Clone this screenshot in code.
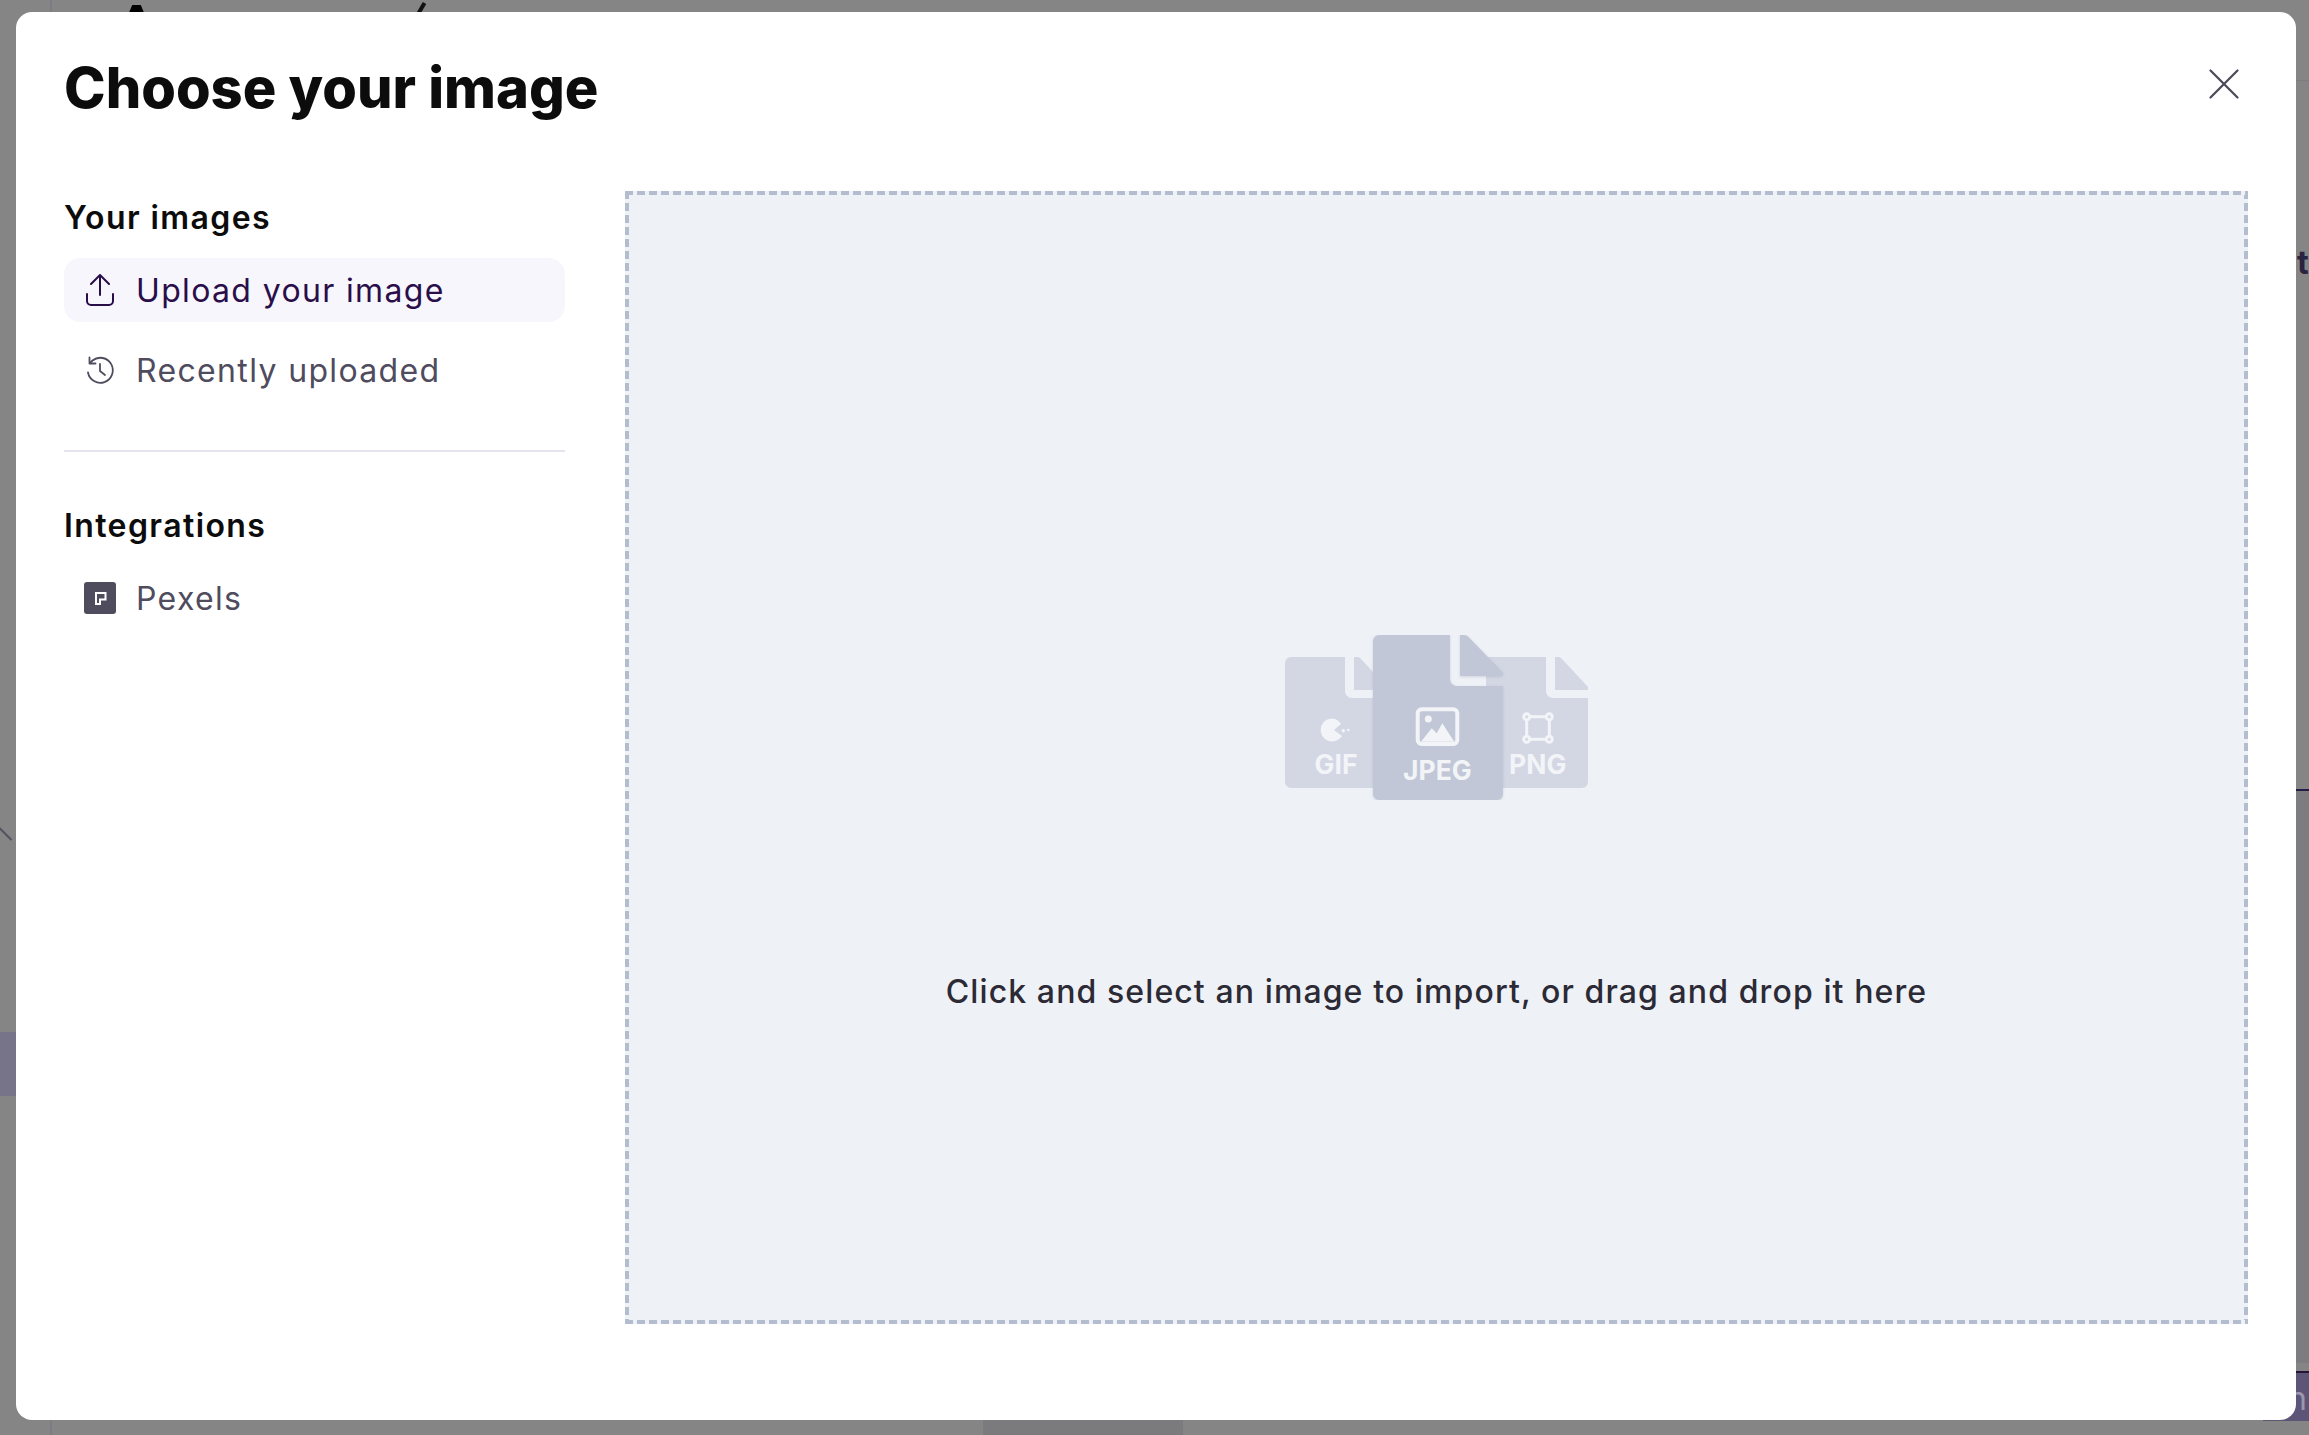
<div class="page">
  <div class="bg-line-v"></div>
  <div class="bg-line-h"></div>
  <div class="bg-a"></div>
  <div class="bg-stroke"></div>
  <div class="bg-diag"></div>
  <div class="bg-purple-left"></div>
  <div class="bg-right-band"></div>
  <div class="bg-right-line"></div>
  <div class="bg-purple-right"><span>n</span></div>
  <div class="bg-strip"></div>
  <span class="bg-t">t</span>

  <div class="overlay">
    <section class="modal">
      <header class="head">
        <h1>Choose your image</h1>
        <button class="close" aria-label="Close">
          <svg width="30" height="30" viewBox="0 0 30 30"><path d="M1.5 1.5L28.5 28.5M28.5 1.5L1.5 28.5" stroke="#4b4858" stroke-width="2.2" fill="none" stroke-linecap="round"/></svg>
        </button>
      </header>
      <div class="body">
        <aside class="side">
          <h2>Your images</h2>
          <div class="item active">
            <svg class="ic" width="32" height="32" viewBox="0 0 32 32" fill="none" stroke="#2a0e4a" stroke-width="2" stroke-linecap="round" stroke-linejoin="round"><path d="M16 21V1M7 10l9-9 9 9"/><path d="M3 20v7a4 4 0 0 0 4 4h18a4 4 0 0 0 4-4v-7"/></svg>
            <span>Upload your image</span>
          </div>
          <div class="item">
            <svg class="ic" width="32" height="32" viewBox="0 0 32 32" fill="none" stroke="#4f4c5e" stroke-width="1.8" stroke-linecap="round" stroke-linejoin="round"><path d="M6.500 8.500l2-2a12.500 12.500 0 1 1-4.500 12"/><path d="M5.500 3.500v6h6"/><path d="M16 10v7l5 4"/></svg>
            <span>Recently uploaded</span>
          </div>
          <hr />
          <h2>Integrations</h2>
          <div class="item">
            <svg class="ic" width="32" height="32" viewBox="0 0 32 32"><rect width="32" height="32" rx="3" fill="#4f4c5e"/><path d="M11 10h11.500v8.500h-5.500v4.500h-6z M13 12v9h2v-4.500h5.500V12z" fill="#fff" fill-rule="evenodd"/></svg>
            <span>Pexels</span>
          </div>
        </aside>
        <div class="drop">
          <svg class="files" width="303" height="165" viewBox="0 0 303 165">
            <defs>
              <filter id="sh" x="-10%" y="-10%" width="120%" height="120%"><feDropShadow dx="0" dy="1" stdDeviation="1.5" flood-color="#8a90a8" flood-opacity=".3"/></filter>
            </defs>
            <g fill="#d3d7e3">
              <path d="M6 22h54v34a7 7 0 0 0 7 7h35v84a6 6 0 0 1-6 6H6a6 6 0 0 1-6-6V28a6 6 0 0 1 6-6z"/>
              <path d="M69 22h3a4 4 0 0 1 3 1l27 29v3H69z"/>
              <path d="M201 22h60v34a7 7 0 0 0 7 7h35v84a6 6 0 0 1-6 6h-96z"/>
              <path d="M270 22h3a4 4 0 0 1 3 1l27 29v3h-33z"/>
            </g>
            <g filter="url(#sh)" fill="#c1c7d6">
              <path d="M94 0h71v44a7 7 0 0 0 7 7h46v108a6 6 0 0 1-6 6H94a6 6 0 0 1-6-6V6a6 6 0 0 1 6-6z"/>
              <path d="M175 0h4a5 5 0 0 1 4 1.500l34 35a2.500 2.500 0 0 1-2 4.500h-40z"/>
            </g>
            <g fill="#f2f4f8">
              <path d="M47 83.500a11.500 11.500 0 1 0 10 17.500L49 95l7-6a11.500 11.500 0 0 0-9-5.500z"/>
              <circle cx="58.300" cy="95.800" r="1.700"/><circle cx="63.300" cy="95" r="1.300"/>
            </g>
            <g fill="none" stroke="#f2f4f8" stroke-width="3">
              <rect x="241.700" y="81.700" width="22.600" height="22.600"/>
              <circle cx="241.700" cy="81.700" r="3" fill="#d3d7e3"/><circle cx="264.300" cy="81.700" r="3" fill="#d3d7e3"/><circle cx="241.700" cy="104.300" r="3" fill="#d3d7e3"/><circle cx="264.300" cy="104.300" r="3" fill="#d3d7e3"/>
            </g>
            <rect x="132.700" y="74.300" width="39.600" height="34.700" rx="4" fill="none" stroke="#f2f4f8" stroke-width="4"/>
            <circle cx="143.300" cy="84" r="3.500" fill="#f2f4f8"/>
            <path d="M136 106.700l10.700-13.400 5 5 5.600-10 12 18.400z" fill="#f2f4f8"/>
            <text x="51" y="139" class="ft">GIF</text>
            <text x="152.300" y="145" class="ft">JPEG</text>
            <text x="252.700" y="139" class="ft">PNG</text>
          </svg>
          <p>Click and select an image to import, or drag and drop it here</p>
        </div>
      </div>
    </section>
  </div>
</div>

<style>
  :global(body) { margin: 0; background: #858585; }
  .page { position: relative; width: 2309px; height: 1435px; overflow: hidden; background: #858585; font-family: Inter, sans-serif; }
  .bg-line-v { position: absolute; left: 50px; top: 0; bottom: 0; width: 2px; background: #7c7c85; }
  .bg-line-h { position: absolute; left: 2296px; right: 0; top: 80px; height: 1px; background: #7c7c85; }
  .bg-a { position: absolute; left: 128px; top: 5px; width: 17px; height: 10px; background: #000; clip-path: polygon(25% 0, 75% 0, 100% 100%, 0 100%); }
  .bg-stroke { position: absolute; left: 419px; top: 2px; width: 4px; height: 14px; background: #111; transform: rotate(30deg); }
  .bg-diag { position: absolute; left: -3px; top: 833px; width: 17px; height: 2px; background: #55525f; transform: rotate(45deg); }
  .bg-purple-left { position: absolute; left: 0; top: 1032px; width: 16px; height: 64px; background: #777388; }
  .bg-right-band { position: absolute; left: 2296px; right: 0; top: 791px; height: 572px; background: #7d7d81; }
  .bg-right-line { position: absolute; left: 2296px; right: 0; top: 789px; height: 2px; background: #241c45; }
  .bg-purple-right { position: absolute; left: 2263px; right: 0; top: 1371px; height: 50px; box-sizing: border-box; background: #5c5578; border-top: 2px solid #241438; overflow: hidden; }
  .bg-purple-right span { position: absolute; left: 25px; top: 6px; font: 400 32px/40px Inter, sans-serif; color: #9b97ad; }
  .bg-strip { position: absolute; left: 983px; top: 1420px; width: 200px; height: 15px; background: #7b7b7d; }
  .bg-t { position: absolute; left: 2297px; top: 243px; font: 700 32px Inter, sans-serif; color: #2a2440; }

  .overlay { position: absolute; inset: 0; box-sizing: border-box; padding: 12px 13px 15px 16px; display: flex; }
  .modal { flex: 1; background: #fff; border-radius: 16px; display: flex; flex-direction: column; padding: 0 48px 96px 48px; box-sizing: border-box; }
  .head { height: 179px; display: flex; justify-content: space-between; align-items: flex-start; }
  h1 { margin: 36px 0 0; font: 800 56px/80px Inter, sans-serif; color: #0c0c0c; letter-spacing: 0; }
  .close { background: none; border: 0; padding: 0; margin: 57px 9px 0 0; width: 30px; height: 30px; }
  .close svg { display: block; }
  .body { flex: 1; display: flex; gap: 60px; min-height: 0; }
  .side { width: 501px; flex: none; }
  h2 { margin: 7px 0 0; font: 600 32px/40px Inter, sans-serif; color: #0c0c0c; letter-spacing: 1.4px; }
  .item { display: flex; align-items: center; height: 64px; margin-top: 20px; border-radius: 16px; padding-left: 20px; font-size: 32px; color: #4f4c5e; gap: 20px; letter-spacing: 1.35px; }
  .item + .item { margin-top: 16px; }
  .item.active { background: #f7f6fc; color: #2a0e4a; }
  .ic { flex: none; display: block; }
  hr { border: 0; height: 2px; background: #e4e4ef; margin: 48px 0 54px; }
  .drop { flex: 1; box-sizing: border-box; background-color: #eef1f6;
    background-image:
      repeating-linear-gradient(90deg, #b4bccf 0 8px, #eef1f6 8px 12px),
      repeating-linear-gradient(90deg, #b4bccf 0 8px, #eef1f6 8px 12px),
      repeating-linear-gradient(180deg, #b4bccf 0 8px, #eef1f6 8px 12px),
      repeating-linear-gradient(180deg, #b4bccf 0 8px, #eef1f6 8px 12px);
    background-size: 100% 4px, 100% 4px, 4px 100%, 4px 100%;
    background-position: 0 0, 0 100%, 0 0, 100% 0;
    background-repeat: no-repeat;
    display: flex; flex-direction: column; align-items: center; padding-top: 444px; }
  .files { display: block; }
  .ft { font: 700 26.5px Inter, sans-serif; fill: #f2f4f8; text-anchor: middle; }
  p { margin: 172px 0 0; font: 500 32px/40px Inter, sans-serif; color: #2b2a35; letter-spacing: 1.1px; }
</style>
